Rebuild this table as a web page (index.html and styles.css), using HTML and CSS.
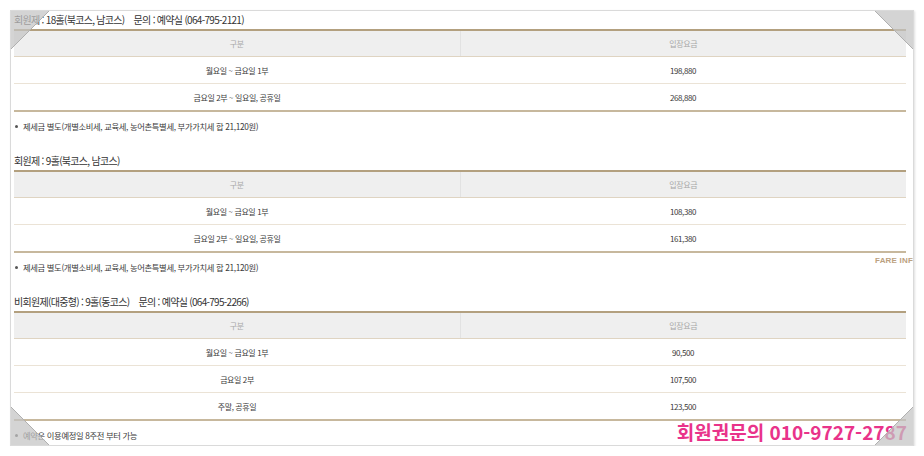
FILE: index.html
```html
<!DOCTYPE html>
<html lang="ko">
<head>
<meta charset="utf-8">
<link rel="stylesheet" href="styles.css">
</head>
<body>
<div class="frame">
  <section class="fare">
    <h3 class="fare-title">회원제 : 18홀(북코스, 남코스)<span class="gap"></span>문의 : 예약실 (064-795-2121)</h3>
    <table class="fare-table">
      <thead><tr><th>구분</th><th class="col2">입장요금</th></tr></thead>
      <tbody>
        <tr><td>월요일 ~ 금요일 1부</td><td>198,880</td></tr>
        <tr><td>금요일 2부 ~ 일요일, 공휴일</td><td>268,880</td></tr>
      </tbody>
    </table>
    <p class="note">제세금 별도(개별소비세, 교육세, 농어촌특별세, 부가가치세 합 21,120원)</p>
  </section>
  <section class="fare">
    <h3 class="fare-title">회원제 : 9홀(북코스, 남코스)</h3>
    <table class="fare-table">
      <thead><tr><th>구분</th><th class="col2">입장요금</th></tr></thead>
      <tbody>
        <tr><td>월요일 ~ 금요일 1부</td><td>108,380</td></tr>
        <tr><td>금요일 2부 ~ 일요일, 공휴일</td><td>161,380</td></tr>
      </tbody>
    </table>
    <p class="note">제세금 별도(개별소비세, 교육세, 농어촌특별세, 부가가치세 합 21,120원)</p>
  </section>
  <section class="fare">
    <h3 class="fare-title">비회원제(대중형) : 9홀(동코스)<span class="gap"></span>문의 : 예약실 (064-795-2266)</h3>
    <table class="fare-table">
      <thead><tr><th>구분</th><th class="col2">입장요금</th></tr></thead>
      <tbody>
        <tr><td>월요일 ~ 금요일 1부</td><td>90,500</td></tr>
        <tr><td>금요일 2부</td><td>107,500</td></tr>
        <tr><td>주말, 공휴일</td><td>123,500</td></tr>
      </tbody>
    </table>
    <p class="note">예약은 이용예정일 8주전 부터 가능</p>
  </section>
  <div class="side-label">FARE INFO</div>
  <div class="contact">회원권문의 010-9727-2787</div>
  <svg class="fold fold-tl" width="40" height="40" viewBox="0 0 40 40"><polygon points="0,0 40,0 0,40" fill="#c4c4c4" fill-opacity="0.72"/><line x1="40" y1="0" x2="0" y2="40" stroke="#b0b0b0" stroke-width="1"/></svg>
  <svg class="fold fold-tr" width="40" height="40" viewBox="0 0 40 40"><polygon points="0,0 40,0 40,40" fill="#c4c4c4" fill-opacity="0.72"/><line x1="0" y1="0" x2="40" y2="40" stroke="#b0b0b0" stroke-width="1"/></svg>
  <svg class="fold fold-bl" width="40" height="40" viewBox="0 0 40 40"><polygon points="0,0 0,40 40,40" fill="#c4c4c4" fill-opacity="0.72"/><line x1="0" y1="0" x2="40" y2="40" stroke="#b0b0b0" stroke-width="1"/></svg>
  <svg class="fold fold-br" width="40" height="40" viewBox="0 0 40 40"><polygon points="40,0 40,40 0,40" fill="#c4c4c4" fill-opacity="0.72"/><line x1="40" y1="0" x2="0" y2="40" stroke="#b0b0b0" stroke-width="1"/></svg>
</div>
</body>
</html>
```
FILE: styles.css
```css
html, body {
  margin: 0;
  padding: 0;
  background: #fff;
}
body {
  font-family: "Noto Sans CJK KR", "Noto Sans", sans-serif;
  color: #333;
}
.frame {
  position: relative;
  box-sizing: border-box;
  margin: 10px 0 0 10px;
  width: 904px;
  height: 436px;
  border: 1px solid #dadada;
  box-shadow: 1px 1px 2px rgba(0, 0, 0, 0.12);
  padding: 0 6px 0 3px;
  overflow: hidden;
}
.fare-title {
  margin: 0;
  height: 18px;
  line-height: 18px;
  font-size: 10px;
  font-weight: normal;
  color: #333;
  letter-spacing: -0.7px;
  white-space: nowrap;
}
.fare + .fare .fare-title {
  margin-top: 12px;
}
.gap {
  display: inline-block;
  width: 9px;
}
.fare-table {
  width: 892px;
  border-collapse: collapse;
  table-layout: fixed;
  border-top: 2px solid #b3a07f;
  border-bottom: 2px solid #c7b89d;
  font-size: 8px;
  letter-spacing: -0.4px;
}
.fare-table th {
  height: 25px;
  padding: 0;
  background: #efefef;
  color: #a8a8a8;
  font-weight: normal;
  border-bottom: 1px solid #dfd4c2;
}
.fare-table th.col2 {
  border-left: 1px solid #e2e2e2;
}
.fare-table td {
  height: 26px;
  padding: 0;
  text-align: center;
  color: #3a3a3a;
  border-bottom: 1px solid #ebe3d6;
}
.fare-table tr:last-child td {
  border-bottom: none;
}
.note {
  margin: 0;
  height: 28px;
  line-height: 28px;
  font-size: 8.3px;
  color: #3a3a3a;
  letter-spacing: -0.35px;
  padding-left: 9px;
  position: relative;
}
.note::before {
  content: "";
  position: absolute;
  left: 1px;
  top: 13px;
  width: 3px;
  height: 3px;
  border-radius: 50%;
  background: #555;
}
.side-label {
  position: absolute;
  left: 864px;
  top: 245px;
  font-size: 8px;
  font-weight: bold;
  letter-spacing: 0.2px;
  color: #bca180;
  white-space: nowrap;
  font-family: "Liberation Sans", sans-serif;
}
.contact {
  position: absolute;
  right: 6px;
  bottom: 1px;
  font-size: 19px;
  font-weight: bold;
  line-height: 24px;
  color: #e9338a;
  white-space: nowrap;
}
.fold {
  position: absolute;
  display: block;
}
.fold-tl { left: -1px; top: -1px; }
.fold-tr { right: -1px; top: -1px; }
.fold-bl { left: -1px; bottom: -1px; }
.fold-br { right: -1px; bottom: -1px; }
```
